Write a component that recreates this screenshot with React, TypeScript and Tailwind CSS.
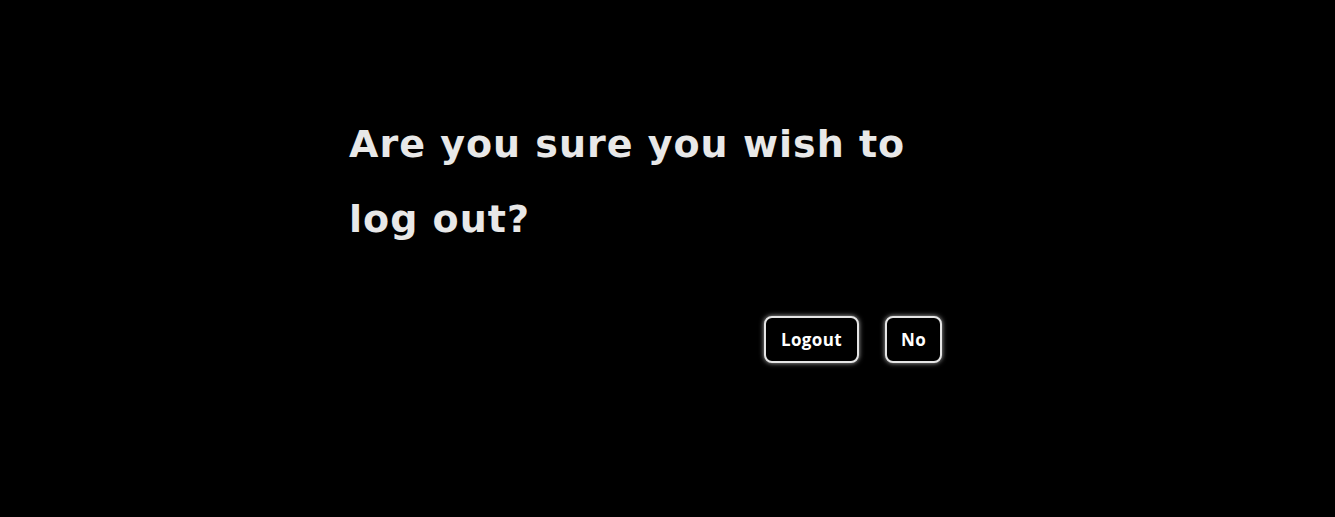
export default function App() {
  return (
    <div className="min-h-[517px] w-full bg-black font-['Open_Sans',sans-serif]">
      <div className="ml-[349px] w-[593px] pt-[107px]">
        <h1 className="font-['DejaVu_Sans',sans-serif] text-[38px] font-bold leading-[75px] tracking-[1px] text-[#e8e8e8]">
          Are you sure you wish to log out?
        </h1>
        <div className="mt-[59px] flex justify-end gap-[26px]">
          <button className="h-[47px] w-[95px] rounded-lg border-2 border-[#e5e5e5] bg-black text-[17px] font-bold tracking-[0.4px] text-white shadow-[0_0_5px_rgba(255,255,255,0.7)]">
            Logout
          </button>
          <button className="h-[47px] w-[57px] rounded-lg border-2 border-[#e5e5e5] bg-black text-[17px] font-bold tracking-[0.4px] text-white shadow-[0_0_5px_rgba(255,255,255,0.7)]">
            No
          </button>
        </div>
      </div>
    </div>
  );
}
